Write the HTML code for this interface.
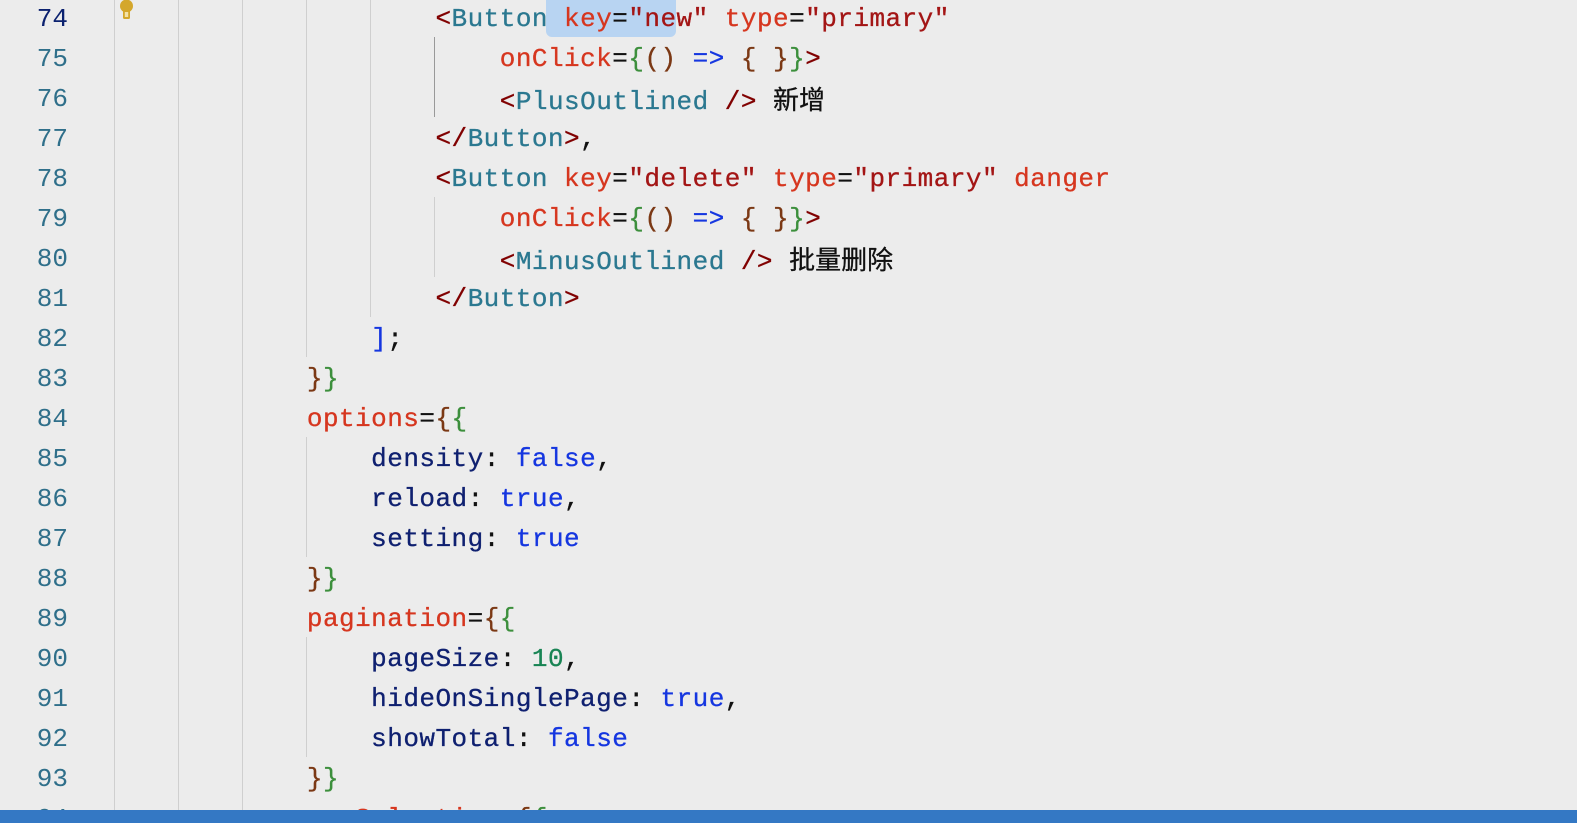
<!DOCTYPE html>
<html><head><meta charset="utf-8"><style>
html,body{margin:0;padding:0;width:1577px;height:823px;overflow:hidden;background:#ececec;position:relative}
.ln{position:absolute;left:0;width:68px;text-align:right;font:26px "Liberation Mono",monospace;color:#2f6f8a;height:40px;line-height:40px}
.cl{position:absolute;left:114px;font:26px "Liberation Mono","Noto Sans CJK SC",monospace;letter-spacing:0.47px;white-space:pre;height:40px;line-height:40px;color:#111;-webkit-text-stroke:0.3px currentColor}
.g{position:absolute;width:1px;background:#cfcfcf}
.p{color:#800000}.t{color:#2b7890}.a{color:#d6361f}.s{color:#a31515}.k{color:#1536e0}.v{color:#0f2070}.n{color:#198454}.gr{color:#3c8f3c}.br{color:#7b3814}.bl{color:#1536e0}
.z{font-family:"Noto Sans CJK SC",sans-serif;letter-spacing:0}
</style></head><body>
<div style="position:absolute;left:546px;top:0;width:130px;height:37px;background:#b8d4f2;border-radius:0 0 6px 6px"></div>
<div class="g" style="left:114px;top:0;height:812px"></div>
<div class="g" style="left:178px;top:0;height:812px"></div>
<div class="g" style="left:242px;top:0;height:812px"></div>
<div class="g" style="left:306px;top:0;height:357px"></div>
<div class="g" style="left:306px;top:437px;height:120px"></div>
<div class="g" style="left:306px;top:637px;height:120px"></div>
<div class="g" style="left:370px;top:0;height:317px"></div>
<div class="g" style="left:434px;top:37px;height:80px;background:#999"></div>
<div class="g" style="left:434px;top:197px;height:80px"></div>
<svg style="position:absolute;left:118px;top:0" width="17" height="22" viewBox="0 0 17 22"><circle cx="8.5" cy="6" r="6.5" fill="#d4a72c"/><rect x="5" y="10" width="7" height="9" rx="1.5" fill="#d4a72c"/><rect x="6.8" y="12" width="3.4" height="5" fill="#f3e2a8"/></svg>
<div id="c"></div>
<div style="position:absolute;left:0;top:810px;width:1577px;height:13px;background:#3478c4"></div>
<script>
var L=[
[74,20,'<span class="p">&lt;</span><span class="t">Button</span> <span class="a">key</span>=<span class="s">"new"</span> <span class="a">type</span>=<span class="s">"primary"</span>'],
[75,24,'<span class="a">onClick</span>=<span class="gr">{</span><span class="br">()</span> <span class="k">=&gt;</span> <span class="br">{ }</span><span class="gr">}</span><span class="p">&gt;</span>'],
[76,24,'<span class="p">&lt;</span><span class="t">PlusOutlined</span> <span class="p">/&gt;</span> <span class="z">新增</span>'],
[77,20,'<span class="p">&lt;/</span><span class="t">Button</span><span class="p">&gt;</span>,'],
[78,20,'<span class="p">&lt;</span><span class="t">Button</span> <span class="a">key</span>=<span class="s">"delete"</span> <span class="a">type</span>=<span class="s">"primary"</span> <span class="a">danger</span>'],
[79,24,'<span class="a">onClick</span>=<span class="gr">{</span><span class="br">()</span> <span class="k">=&gt;</span> <span class="br">{ }</span><span class="gr">}</span><span class="p">&gt;</span>'],
[80,24,'<span class="p">&lt;</span><span class="t">MinusOutlined</span> <span class="p">/&gt;</span> <span class="z">批量删除</span>'],
[81,20,'<span class="p">&lt;/</span><span class="t">Button</span><span class="p">&gt;</span>'],
[82,16,'<span class="bl">]</span>;'],
[83,12,'<span class="br">}</span><span class="gr">}</span>'],
[84,12,'<span class="a">options</span>=<span class="br">{</span><span class="gr">{</span>'],
[85,16,'<span class="v">density</span>: <span class="k">false</span>,'],
[86,16,'<span class="v">reload</span>: <span class="k">true</span>,'],
[87,16,'<span class="v">setting</span>: <span class="k">true</span>'],
[88,12,'<span class="br">}</span><span class="gr">}</span>'],
[89,12,'<span class="a">pagination</span>=<span class="br">{</span><span class="gr">{</span>'],
[90,16,'<span class="v">pageSize</span>: <span class="n">10</span>,'],
[91,16,'<span class="v">hideOnSinglePage</span>: <span class="k">true</span>,'],
[92,16,'<span class="v">showTotal</span>: <span class="k">false</span>'],
[93,12,'<span class="br">}</span><span class="gr">}</span>'],
[94,12,'<span class="a">rowSelection</span>=<span class="br">{</span><span class="gr">{</span>']
];
var h='';
L.forEach(function(r,i){var top=-1+40*i;
h+='<div class="ln" style="top:'+top+'px'+(i==0?';color:#0b216f':'')+'">'+r[0]+'</div>';
h+='<div class="cl" style="top:'+top+'px">'+' '.repeat(r[1])+r[2]+'</div>';});
document.getElementById('c').innerHTML=h;
</script>
</body></html>
